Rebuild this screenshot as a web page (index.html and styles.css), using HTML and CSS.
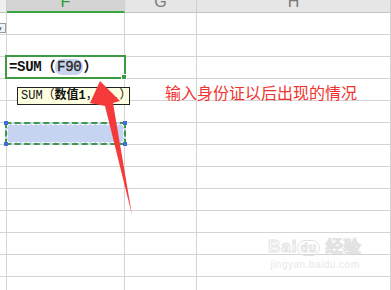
FILE: index.html
```html
<html>
<head>
<title>sheet</title>
<meta name="viewport" content="width=device-width, initial-scale=1"/>
<link rel="stylesheet" href="styles.css">
</head>
<body>

<div class="sheet">
  <div class="hd corner"></div>
  <div class="hd cur"><span>F</span></div>
  <div class="hd"><span>G</span></div>
  <div class="hd"><span>H</span></div>

  <div class="c side"><span class="drop">&#9662;</span></div><div class="c"></div><div class="c"></div><div class="c"></div>
  <div class="c side"></div><div class="c"></div><div class="c"></div><div class="c"></div>
  <div class="c side"></div><div class="c"></div><div class="c"></div><div class="c"></div>
  <div class="c side"></div><div class="c"></div><div class="c"></div><div class="c"></div>
  <div class="c side"></div><div class="c"></div><div class="c"></div><div class="c"></div>
  <div class="c side"></div><div class="c"></div><div class="c"></div><div class="c"></div>
  <div class="c side"></div><div class="c"></div><div class="c"></div><div class="c"></div>
  <div class="c side"></div><div class="c"></div><div class="c"></div><div class="c"></div>
  <div class="c side"></div><div class="c"></div><div class="c"></div><div class="c"></div>
  <div class="c side"></div><div class="c"></div><div class="c"></div><div class="c"></div>
  <div class="c side"></div><div class="c"></div><div class="c"></div><div class="c"></div>
  <div class="c side"></div><div class="c"></div><div class="c"></div><div class="c"></div>
  <div class="c side"></div><div class="c"></div><div class="c"></div><div class="c"></div>

  <!-- cell being edited -->
  <div class="edit">=SUM（<span class="ref">F90</span>）<i class="handle"></i></div>

  <div class="tip">SUM（<b>数值1</b>，...）</div>

  <!-- referenced cell, marching ants -->
  <div class="pick"><i class="k tl"></i><i class="k tr"></i><i class="k bl"></i><i class="k br"></i></div>

  <div class="note">输入身份证以后出现的情况</div>

  <svg class="arrow" width="391" height="290" viewBox="0 0 391 290">
    <polygon points="100,81 120,101 113,103 132,215 105,106 90,103" fill="#f43a3a"/>
  </svg>

  <div class="mark">
    <div class="brand">Bai<span class="du">du</span> 经验</div>
    <div class="url">jingyan.baidu.com</div>
  </div>
</div>

</body>
</html>
```

FILE: styles.css
```css
html, body {margin:0; padding:0; background:#fff;}
body {font: 12px "Liberation Sans", Arial, sans-serif; overflow:hidden;}

.sheet {
 position: relative;
 width: 391px;
 height: 290px;
 overflow: hidden;
 display: grid;
 grid-template-columns: 7px 118px 72px 1fr;
 grid-template-rows: 13px repeat(13, 22px);
}

.hd {
 background: #e6e6e6;
 border-right: 1px solid #cfcfcf;
 border-bottom: 1px solid #c4c4c4;
 box-sizing: border-box;
 overflow: hidden;
 text-align: center;
 color: #7a7a7a;
 font: 16px/16px "Liberation Sans", Arial, sans-serif;
}
.hd span {display:block; margin-top:-6px;}
.hd.cur {background:#d4d4d4; color:#2f9a3a; border-bottom:2px solid #3aa63f;}
.corner {background:#efefef;}

.c {
 border-right: 1px solid #d4d4d4;
 border-bottom: 1px solid #d4d4d4;
 box-sizing: border-box;
}
.side {display:flex; align-items:flex-end;}
.drop {
 display: block;
 width: 6px;
 height: 10px;
 margin-bottom: 1px;
 background: #f2f2f2;
 border: 1px solid #9a9a9a;
 border-left: 0;
 box-sizing: border-box;
 font-size: 7px;
 line-height: 9px;
 color: #444;
 overflow: hidden;
 text-indent: -2px;
}

.edit {
 position: absolute;
 left: 5px; top: 55px;
 width: 121px; height: 24px;
 box-sizing: border-box;
 border: 2px solid #3c9a42;
 background: #fff;
 padding: 1px 0 0 2px;
 font: bold 14px/19px "Liberation Mono", "Noto Sans CJK SC", monospace;
 letter-spacing: -0.3px;
 color: #111;
 white-space: nowrap;
}
.ref {background:#c9d5ef; border-radius:7px; padding:0 2px; font-weight:normal; color:#2a2a2a; -webkit-text-stroke:0.4px #2a2a2a;}
.handle {
 position: absolute;
 right: -3px; bottom: -3px;
 width: 4px; height: 4px;
 background: #3c9a42;
 border: 1px solid #fff;
}

.tip {
 position: absolute;
 left: 17px; top: 87px;
 width: 113px; height: 18px;
 box-sizing: border-box;
 background: #ffffe1;
 border: 1px solid #222;
 padding-left: 3px;
 font: 12px/16px "Liberation Mono", "Noto Sans CJK SC", monospace;
 color: #111;
 white-space: nowrap;
}
.tip b {font-weight:bold;}

.pick {
 position: absolute;
 left: 5px; top: 122px;
 width: 121px; height: 23px;
 box-sizing: border-box;
 background: #c6d4f1;
 border: 2px dashed #3d9a44;
 outline: 1px dashed #fff;
 outline-offset: -3px;
}
.k {position:absolute; width:4px; height:4px; background:#3f6fd8;}
.tl {left:-3px; top:-3px;}
.tr {right:-3px; top:-3px;}
.bl {left:-3px; bottom:-3px;}
.br {right:-3px; bottom:-3px;}

.note {
 position: absolute;
 left: 165px; top: 83px;
 font: 16px/18px "Noto Sans CJK SC", sans-serif;
 color: #f2322f;
 white-space: nowrap;
}

.arrow {position:absolute; left:0; top:0;}

.mark {
 position: absolute;
 left: 268px; top: 236px;
 color: #ececec;
 text-align: center;
}
.brand {font: bold 17px/22px "Liberation Sans", Arial, sans-serif; color:#fff; -webkit-text-stroke:1px #e2e2e2; letter-spacing:1px;}
.brand .du {border:1px solid #e2e2e2; border-radius:8px; padding:0 2px; font-size:12px;}
.url {font: 10px/12px "Liberation Sans", Arial, sans-serif; color:#e8e8e8; letter-spacing:0.5px;}
```
